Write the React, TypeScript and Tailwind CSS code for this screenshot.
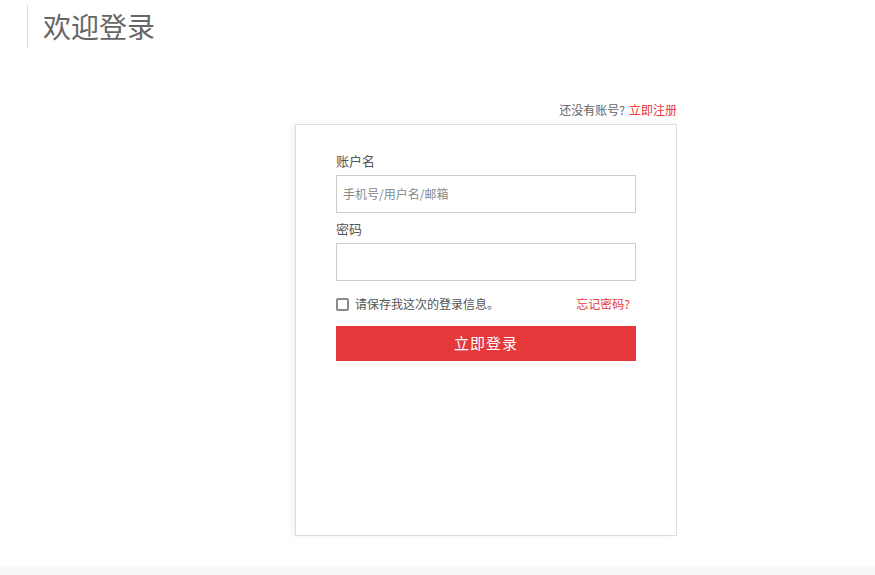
import React from "react";

export default function App() {
  const font = { fontFamily: '"Noto Sans CJK SC", "Liberation Sans", sans-serif' };
  return (
    <div className="w-[875px] h-[575px] bg-white flex flex-col overflow-hidden" style={font}>
      <div className="flex items-start pt-[5px] pl-[27px] h-[48px]">
        <div className="w-px h-[43px] bg-[#dddddd]" />
        <h1 className="ml-[15px] mt-[3px] text-[28px] leading-[36px] text-[#666666]">欢迎登录</h1>
      </div>
      <div className="w-[382px] ml-[295px] mt-[54px] flex flex-col">
        <div className="flex justify-end text-[12px] leading-[16px] h-[16px]">
          <span className="text-[#666666]">还没有账号?</span>
          <a className="ml-[4px] text-[#e5383b]">立即注册</a>
        </div>
        <div className="mt-[6px] h-[412px] border border-[#dddddd] shadow-[-3px_0_5px_rgba(0,0,0,0.06)] px-[40px] pt-[26px]">
          <div className="text-[13px] leading-[20px] text-[#555555]">账户名</div>
          <div className="mt-[4px] h-[38px] border border-[#cccccc] flex items-center px-[6px] text-[12px] text-[#888888]">
            手机号/用户名/邮箱
          </div>
          <div className="mt-[6px] text-[13px] leading-[20px] text-[#555555]">密码</div>
          <div className="mt-[4px] h-[38px] border border-[#cccccc]" />
          <div className="mt-[15px] flex items-center justify-between text-[12px] leading-[16px]">
            <div className="flex items-center">
              <span className="w-[13px] h-[13px] border-2 border-[#8a8a8a] rounded-[2px]" />
              <span className="ml-[6px] text-[#555555]">请保存我这次的登录信息。</span>
            </div>
            <a className="mr-[6px] text-[#e5383b]">忘记密码?</a>
          </div>
          <button className="mt-[14px] w-full h-[35px] bg-[#e5383b] text-white text-[15px] tracking-[1px]">立即登录</button>
        </div>
      </div>
      <div className="flex-1" />
      <div className="h-[9px] bg-[#f8f8f8]" />
    </div>
  );
}
